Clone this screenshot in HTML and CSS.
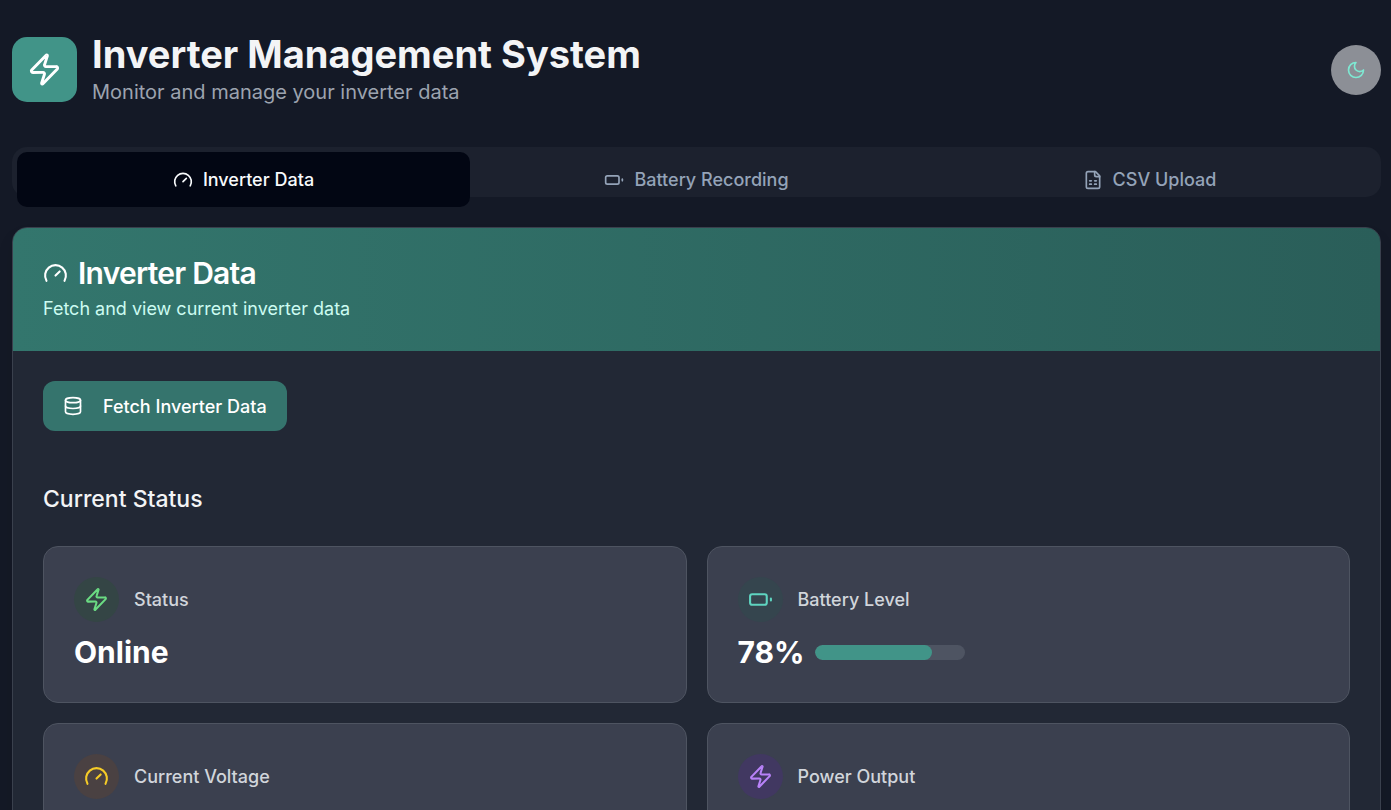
FILE: index.html
```html
<!DOCTYPE html>
<html lang="en">
<head>
<meta charset="utf-8">
<meta name="viewport" content="width=device-width, initial-scale=1">
<title>Inverter Management System</title>
<link rel="stylesheet" href="styles.css">
</head>
<body>
<svg class="sprite" aria-hidden="true">
  <symbol id="zap" viewBox="0 0 24 24"><path d="M4 14a1 1 0 0 1-.78-1.63l9.9-10.2a.5.5 0 0 1 .86.46l-1.92 6.02A1 1 0 0 0 13 10h7a1 1 0 0 1 .78 1.63l-9.9 10.2a.5.5 0 0 1-.86-.46l1.92-6.02A1 1 0 0 0 11 14z"/></symbol>
  <symbol id="gauge" viewBox="0 0 24 24"><path d="m12 14 4-4"/><path d="M3.34 19a10 10 0 1 1 17.32 0"/></symbol>
  <symbol id="battery" viewBox="0 0 24 24"><rect x="2" y="7" width="16" height="10" rx="2" ry="2"/><path d="M22 11v2"/></symbol>
  <symbol id="sheet" viewBox="0 0 24 24"><path d="M15 2H6a2 2 0 0 0-2 2v16a2 2 0 0 0 2 2h12a2 2 0 0 0 2-2V7Z"/><path d="M14 2v4a2 2 0 0 0 2 2h4"/><path d="M8 13h2"/><path d="M14 13h2"/><path d="M8 17h2"/><path d="M14 17h2"/></symbol>
  <symbol id="moon" viewBox="0 0 24 24"><path d="M12 3a6 6 0 0 0 9 9 9 9 0 1 1-9-9Z"/></symbol>
  <symbol id="database" viewBox="0 0 24 24"><ellipse cx="12" cy="5" rx="9" ry="3"/><path d="M3 5v14a9 3 0 0 0 18 0V5"/><path d="M3 12a9 3 0 0 0 18 0"/></symbol>
</svg>
<div class="page">
  <header class="header">
    <div class="logo"><svg class="icon icon-xl"><use href="#zap"/></svg></div>
    <div class="brand">
      <h1 class="brand-title">Inverter Management System</h1>
      <p class="brand-subtitle">Monitor and manage your inverter data</p>
    </div>
    <button class="theme-toggle" type="button" aria-label="Toggle theme"><svg class="icon"><use href="#moon"/></svg></button>
  </header>
  <main>
    <div class="tabs" role="tablist">
      <button class="tab tab-active" type="button" role="tab" aria-selected="true"><svg class="icon"><use href="#gauge"/></svg>Inverter Data</button>
      <button class="tab" type="button" role="tab" aria-selected="false"><svg class="icon"><use href="#battery"/></svg>Battery Recording</button>
      <button class="tab" type="button" role="tab" aria-selected="false"><svg class="icon"><use href="#sheet"/></svg>CSV Upload</button>
    </div>
    <section class="panel">
      <div class="panel-header">
        <h2 class="panel-title"><svg class="icon icon-lg"><use href="#gauge"/></svg>Inverter Data</h2>
        <p class="panel-subtitle">Fetch and view current inverter data</p>
      </div>
      <div class="panel-body">
        <button class="fetch" type="button"><svg class="icon"><use href="#database"/></svg>Fetch Inverter Data</button>
        <h3 class="section-title">Current Status</h3>
        <div class="stats">
          <article class="stat">
            <div class="stat-head"><span class="badge badge-green"><svg class="icon icon-lg"><use href="#zap"/></svg></span><h4 class="stat-label">Status</h4></div>
            <p class="stat-value">Online</p>
          </article>
          <article class="stat">
            <div class="stat-head"><span class="badge badge-teal"><svg class="icon icon-lg"><use href="#battery"/></svg></span><h4 class="stat-label">Battery Level</h4></div>
            <div class="stat-value">78%<span class="meter"><span class="meter-fill" style="width:78%"></span></span></div>
          </article>
          <article class="stat">
            <div class="stat-head"><span class="badge badge-yellow"><svg class="icon icon-lg"><use href="#gauge"/></svg></span><h4 class="stat-label">Current Voltage</h4></div>
          </article>
          <article class="stat">
            <div class="stat-head"><span class="badge badge-purple"><svg class="icon icon-lg"><use href="#zap"/></svg></span><h4 class="stat-label">Power Output</h4></div>
          </article>
        </div>
      </div>
    </section>
  </main>
</div>
</body>
</html>
```
FILE: styles.css
```css
* { box-sizing: border-box; }
html { background: #141926; }
body {
  margin: 0;
  height: 100vh;
  overflow: hidden;
  color: #f3f4f6;
  font-family: Inter, "Liberation Sans", sans-serif;
  font-size: 18px;
  line-height: 25px;
}
h1, h2, h3, h4, p { margin: 0; }
button { border: 0; padding: 0; font: inherit; color: inherit; cursor: pointer; }
.sprite { display: none; }
.icon {
  width: 20px;
  height: 20px;
  flex: none;
  fill: none;
  stroke: currentColor;
  stroke-width: 2;
  stroke-linecap: round;
  stroke-linejoin: round;
}
.icon-lg { width: 25px; height: 25px; }
.icon-xl { width: 35px; height: 35px; }
.page { padding: 32px 10px 0 12px; }
.header { display: flex; align-items: center; gap: 15px; margin-bottom: 40px; }
.logo {
  display: grid;
  place-items: center;
  width: 65px;
  height: 65px;
  border-radius: 15px;
  background: #419488;
  color: #fff;
}
.brand { flex: 1; }
.brand-title { font-size: 38px; line-height: 45px; font-weight: 700; }
.brand-subtitle { font-size: 20px; line-height: 30px; color: #9ca3af; }
.theme-toggle {
  display: grid;
  place-items: center;
  width: 50px;
  height: 50px;
  border-radius: 50%;
  background: #8c8f96;
  color: #7ee8d2;
}
.tabs {
  display: grid;
  grid-template-columns: repeat(3, 1fr);
  align-items: start;
  height: 50px;
  padding: 5px;
  margin-bottom: 30px;
  border-radius: 15px;
  background: #1c212e;
}
.tab {
  display: flex;
  align-items: center;
  justify-content: center;
  gap: 10px;
  padding: 15px;
  border-radius: 10px;
  background: transparent;
  color: #94a3b8;
  font-weight: 500;
}
.tab-active { background: #020613; color: #f8fafc; }
.panel {
  border: 1px solid #3a404d;
  border-radius: 15px;
  background: #222835;
  overflow: hidden;
  box-shadow: 0 10px 15px rgba(0, 0, 0, .1);
}
.panel-header {
  padding: 30px;
  background: linear-gradient(to right, #33766d, #2a5e59);
}
.panel-title {
  display: flex;
  align-items: center;
  gap: 10px;
  margin-bottom: 8px;
  font-size: 30px;
  line-height: 30px;
  font-weight: 600;
  letter-spacing: -.025em;
  color: #fff;
}
.panel-subtitle { color: #ccfbf1; }
.panel-body { padding: 30px; }
.fetch {
  display: flex;
  align-items: center;
  gap: 20px;
  height: 50px;
  padding: 0 20px;
  border-radius: 12px;
  background: #35746d;
  color: #fff;
  font-weight: 500;
}
.section-title { margin: 50px 0 28px; font-size: 23px; line-height: 37px; font-weight: 500; }
.stats { display: grid; grid-template-columns: 1fr 1fr; gap: 20px; }
.stat {
  min-height: 157px;
  padding: 30px;
  border: 1px solid #4e5461;
  border-radius: 15px;
  background: #3b404f;
}
.stat-head { display: flex; align-items: center; gap: 15px; margin-bottom: 10px; }
.stat-label { font-size: 18px; font-weight: 500; color: #d1d5db; }
.stat-value { display: flex; align-items: center; gap: 10px; font-size: 30px; line-height: 40px; font-weight: 700; color: #fff; }
.badge { display: grid; place-items: center; width: 45px; height: 45px; border-radius: 50%; }
.badge-green { background: #344545; color: #6bdc83; }
.badge-teal { background: #35454e; color: #5fd4c0; }
.badge-yellow { background: #4a4142; color: #f5cb27; }
.badge-purple { background: #413861; color: #b882f8; }
.meter { width: 150px; height: 15px; border-radius: 8px; background: #4e5462; overflow: hidden; }
.meter-fill { display: block; height: 100%; border-radius: 8px; background: #419488; }
```
